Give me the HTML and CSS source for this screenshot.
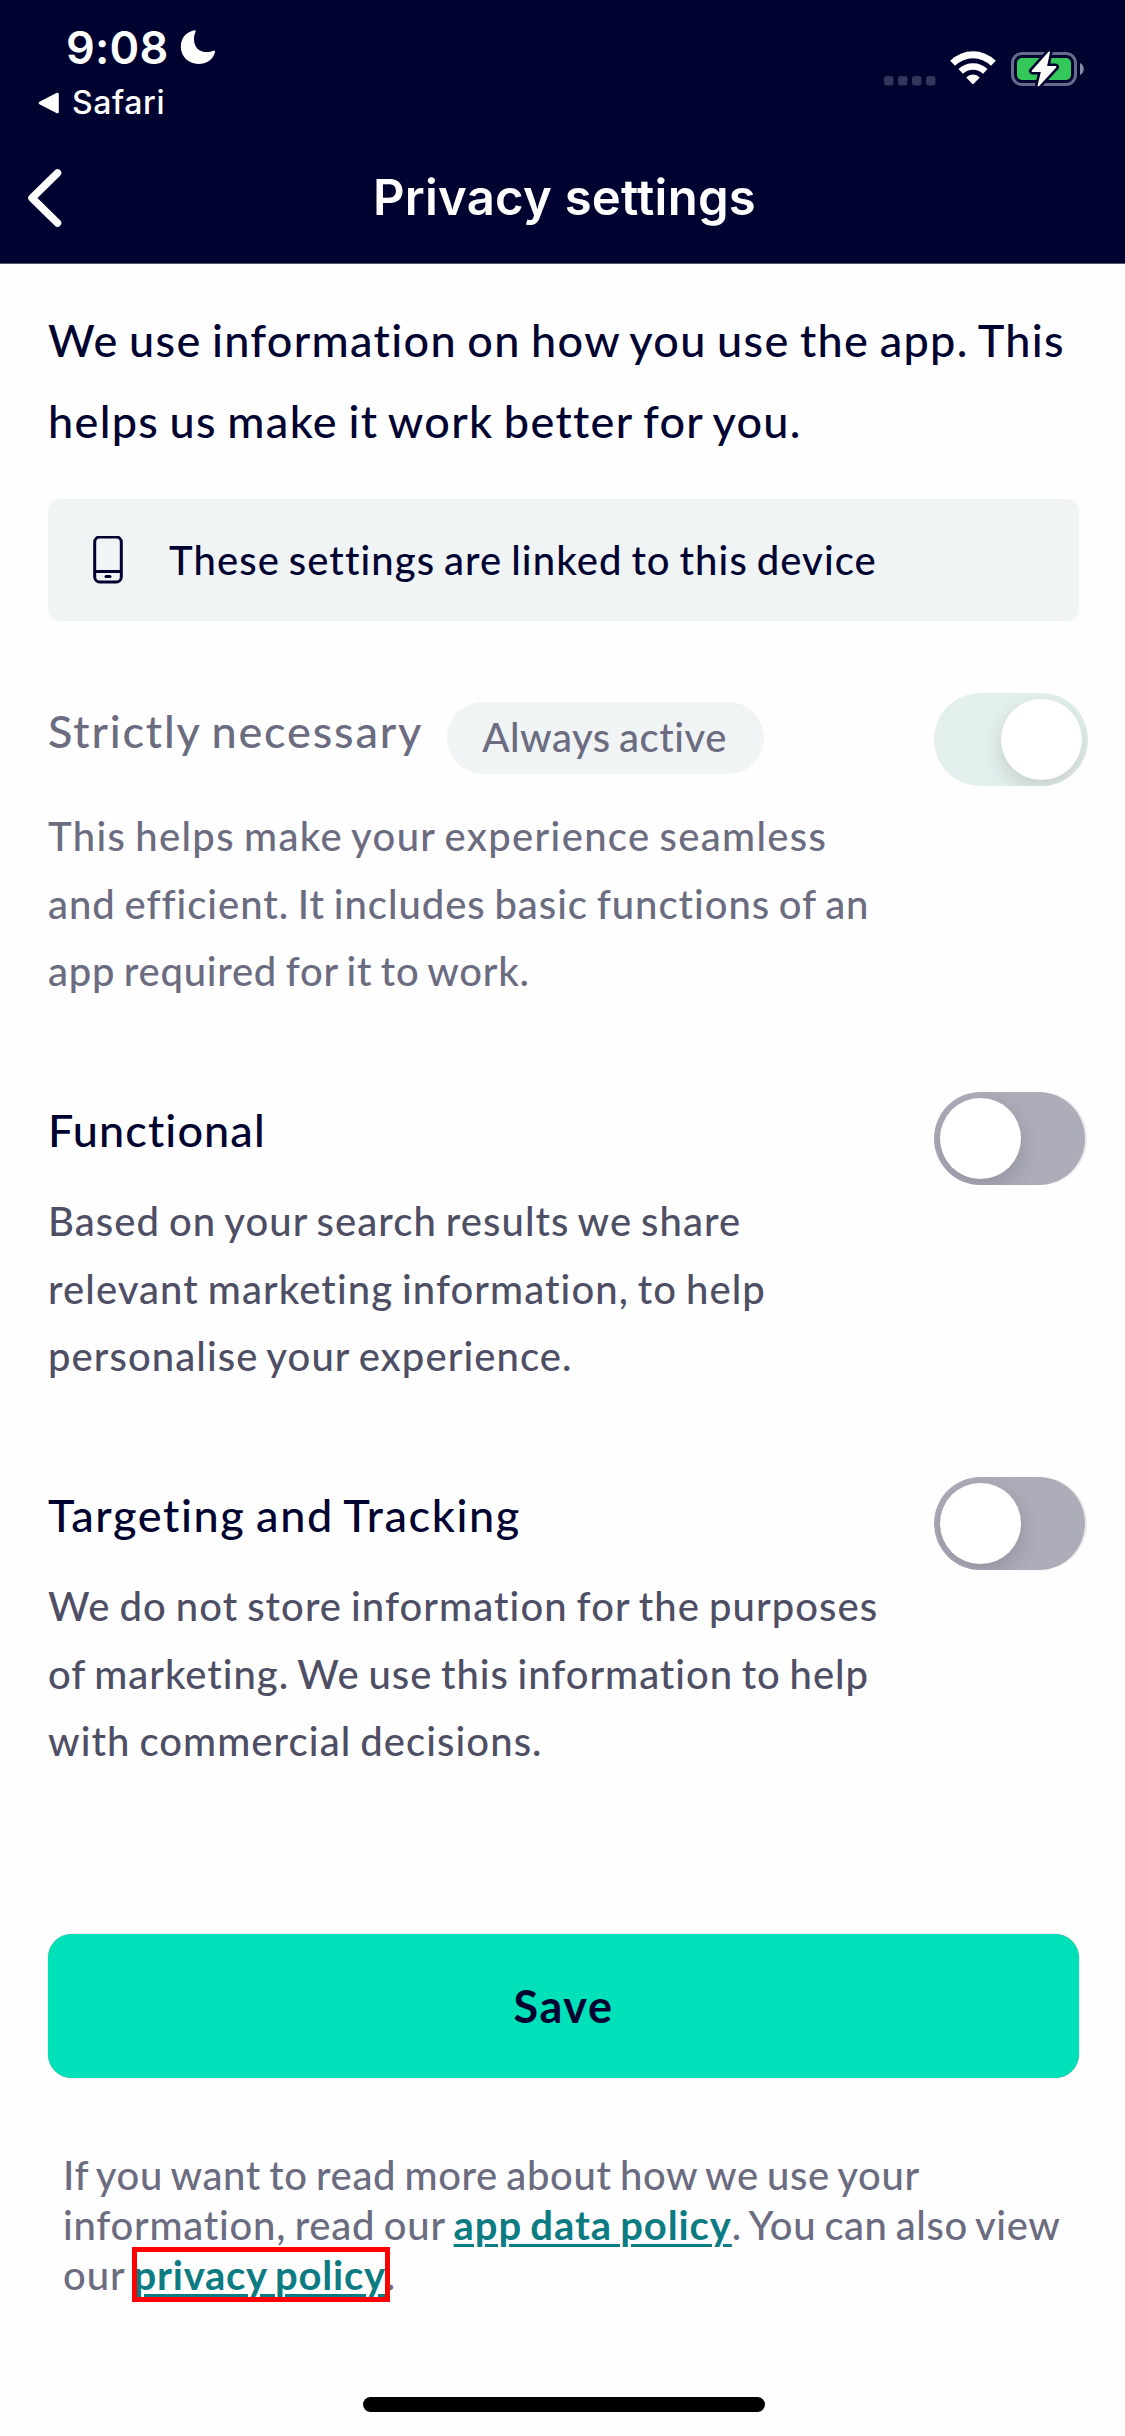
FILE: index.html
```html
<!DOCTYPE html>
<html lang="en">
<head>
<meta charset="utf-8">
<title>Privacy settings</title>
<link rel="stylesheet" href="styles.css">
</head>
<body>
<header class="header">
  <div class="status">
    <div class="status-left">
      <div class="time-row">
        <span class="time">9:08</span>
        <svg class="moon" width="36" height="36" viewBox="0 0 36 36"><path d="M14.2 1.2C5.800 3 .8 9.400.8 17.600.8 27.500 8.400 35 18.400 35 26.500 35 33 30.500 35 23.200c.3-1.200-.5-1.900-1.600-1.400-2 .9-4 1.300-6.200 1.300-8.200 0-13.200-5-13.200-13.200 0-2.400.5-4.700 1.400-6.700.7-1.500.2-2.300-1.200-2z" fill="#fff"/></svg>
      </div>
      <div class="back-app">
        <svg width="22" height="22" viewBox="0 0 22 22"><path d="M19.500 2v18L2 11z" fill="#fff" stroke="#fff" stroke-width="2.600" stroke-linejoin="round"/></svg>
        <span>Safari</span>
      </div>
    </div>
    <div class="status-right">
      <svg class="signal" width="53" height="10" viewBox="0 0 53 10" fill="#33355a"><rect width="9.500" height="9.500" rx="3"/><rect x="14" width="9.500" height="9.500" rx="3"/><rect x="28" width="9.500" height="9.500" rx="3"/><rect x="42" width="9.500" height="9.500" rx="3"/></svg>
      <svg class="wifi" width="46" height="34" viewBox="0 0 46 34" fill="none" stroke="#fff">
        <path d="M2.600 12.300Q11.500 3.700 23 3.700T43.400 12.300" stroke-width="7"/>
        <path d="M10.700 20.400Q16 15.400 23 15.400T35.300 20.400" stroke-width="6.500"/>
        <path d="M16.200 26.600Q19 23.600 23 23.600T29.800 26.600L23.700 32.700q-.7.7-1.400 0z" fill="#fff" stroke="none"/>
      </svg>
      <svg class="battery" width="74" height="38" viewBox="0 0 74 38">
        <rect x="1.500" y="3.500" width="63" height="31" rx="9.500" fill="none" stroke="#6a6b8c" stroke-width="3"/>
        <path d="M69 13c5 2 5 10 0 12z" fill="#8a8ba3"/>
        <rect x="6" y="8" width="54" height="22" rx="5" fill="#34c759"/>
        <path d="M38 2.500L21.500 21h9.500L27.500 35.500 44.500 17H35z" fill="#fff" stroke="#000330" stroke-width="7" stroke-linejoin="round"/>
        <path d="M38 2.500L21.500 21h9.500L27.500 35.500 44.500 17H35z" fill="#fff" stroke="#fff" stroke-width="1.800" stroke-linejoin="round"/>
      </svg>
    </div>
  </div>
  <div class="nav">
    <svg class="chevron" width="34" height="58" viewBox="0 0 34 58"><path d="M29.500 4L4 29l25.500 25" fill="none" stroke="#fff" stroke-width="7.500" stroke-linecap="round" stroke-linejoin="round"/></svg>
    <h1 class="title">Privacy settings</h1>
  </div>
</header>
<main class="content">
  <p class="intro"><span class="line ls-13">We use information on how you use the app. This</span><span class="line ls-13">helps us make it work better for you.</span></p>
  <div class="notice">
    <svg width="30" height="49" viewBox="0 0 30 49" fill="none" stroke="#000330" stroke-width="3"><rect x="1.700" y="1" width="26.600" height="45" rx="5"/><path d="M2 35.500h26"/><path d="M13 40.500h4" stroke-linecap="round"/></svg>
    <span class="ls-11">These settings are linked to this device</span>
  </div>
  <section class="setting disabled">
    <div class="text">
      <div class="heading with-pill"><h2 class="ls-18">Strictly necessary</h2><span class="pill ls-05">Always active</span></div>
      <p><span class="line ls-13">This helps make your experience seamless</span><span class="line ls-10">and efficient. It includes basic functions of an</span><span class="line ls-07">app required for it to work.</span></p>
    </div>
    <div class="toggle on"><div class="knob"></div></div>
  </section>
  <section class="setting">
    <div class="text">
      <div class="heading"><h2 class="ls-11">Functional</h2></div>
      <p><span class="line ls-11">Based on your search results we share</span><span class="line ls-11">relevant marketing information, to help</span><span class="line ls-11">personalise your experience.</span></p>
    </div>
    <div class="toggle"><div class="knob"></div></div>
  </section>
  <section class="setting">
    <div class="text">
      <div class="heading"><h2 class="ls-17">Targeting and Tracking</h2></div>
      <p><span class="line ls-11">We do not store information for the purposes</span><span class="line ls-10">of marketing. We use this information to help</span><span class="line ls-11">with commercial decisions.</span></p>
    </div>
    <div class="toggle"><div class="knob"></div></div>
  </section>
  <button class="save ls-17">Save</button>
  <p class="footnote"><span class="line ls-06">If you want to read more about how we use your</span><span class="line"><span class="ls-07">information, read our </span><a class="link">app data policy</a><span class="ls-05">. You can also view</span></span><span class="line"><span class="ls-10">our </span><a class="link marked">privacy policy</a>.</span></p>
</main>
<div class="home-bar"></div>
</body>
</html>
```
FILE: styles.css
```css
*, *::after { box-sizing: border-box; }
body { margin: 0; background: #fefefe; color: #000330; font-family: "Lato", "Noto Sans", sans-serif; font-weight: 500; }
h1, h2, p { margin: 0; }
svg { display: block; flex: none; }

.header { height: 264px; background: #000330; color: #fff; font-family: "Inter", sans-serif; border-bottom: 1px solid #55566a; }
.status { display: flex; justify-content: space-between; height: 158px; padding: 23px 40px 0 38px; }
.status-left { display: flex; flex-direction: column; gap: 9px; }
.time-row { display: flex; gap: 12px; padding-left: 28px; }
.time { font-size: 45px; font-weight: 570; line-height: 50px; letter-spacing: 0.2px; }
.moon { margin-top: 6px; }
.back-app { display: flex; align-items: center; gap: 12px; font-size: 32px; line-height: 41px; letter-spacing: 0.6px; }
.status-right { display: flex; align-items: flex-start; }
.signal { margin: 53px 13px 0 0; }
.wifi { margin: 28px 15px 0 0; }
.battery { margin-top: 27px; }
.nav { display: grid; grid-template-columns: 34px 1fr 34px; align-items: center; height: 80px; padding: 0 28px; }
.title { padding-left: 4px; text-align: center; font-size: 49px; font-weight: 580; line-height: 80px; letter-spacing: 0.25px; }

.content { padding: 36px 46px 0 48px; word-spacing: -2.3px; }
.line { display: block; white-space: nowrap; }
.intro { font-size: 45px; line-height: 81px; }
.notice { display: flex; align-items: center; gap: 46px; height: 122px; margin-top: 37px; border-radius: 12px; padding: 0 45px; background: #f0f4f5; font-size: 40px; }

.setting { display: flex; justify-content: space-between; margin-top: 86.5px; margin-right: -9px; }
.notice + .setting { margin-top: 72px; }
.text { padding-top: 2px; }
.heading { display: flex; height: 94px; padding-top: 6px; }
.with-pill { height: 108px; gap: 24px; }
h2 { font-size: 45px; font-weight: 500; line-height: 60px; }
.pill { height: 72px; margin-top: 1px; padding: 0 37px 0 35px; border-radius: 36px; background: #f0f4f5; font-size: 40px; line-height: 71px; }
.setting p { color: #4e4f65; font-size: 40px; line-height: 67.5px; }
.setting.disabled, .setting.disabled p { color: #6b6c80; }

.toggle { flex: none; width: 151px; height: 93px; margin-right: 3px; padding: 6px; border-radius: 47px; background: #adadb9; box-shadow: 2px 0 1px #e8e8ea; overflow: hidden; }
.knob { width: 81px; height: 81px; border-radius: 50%; background: #fff; box-shadow: 0 8px 22px rgba(0, 0, 40, 0.16); }
.toggle.on { width: 154px; margin-right: 0; background: #e4f0ed; box-shadow: none; }
.toggle.on .knob { margin-left: 61px; box-shadow: 0 8px 22px rgba(0, 0, 0, 0.15); }

.save { display: block; width: 100%; height: 144px; margin: 158px 0 72px; padding: 0; border: 0; border-radius: 24px; background: #00e1b9; color: #000330; font: 700 45px "Lato", "Noto Sans", sans-serif; box-shadow: 0 0 1px #777; }
.footnote { padding-left: 15px; color: #6b6c80; font-size: 40px; line-height: 50px; }
.link { color: #0d7b82; font-weight: 700; letter-spacing: 0.9px; text-decoration: underline; text-decoration-thickness: 3px; text-underline-offset: 4px; }
.marked { position: relative; letter-spacing: 0.75px; }
/* highlight frame around the policy link */
.marked::after { content: ""; position: absolute; left: -2px; right: -4px; top: -4px; height: 55px; border: 5px solid #f00; }
.home-bar { position: relative; left: 1px; width: 402px; height: 15px; margin: 97px auto 0; border-radius: 8px; background: #000; }

.ls-05 { letter-spacing: 0.54px; }
.ls-06 { letter-spacing: 0.62px; }
.ls-07 { letter-spacing: 0.76px; }
.ls-10 { letter-spacing: 0.96px; }
.ls-11 { letter-spacing: 1.08px; }
.ls-13 { letter-spacing: 1.32px; }
.ls-17 { letter-spacing: 1.62px; }
.ls-18 { letter-spacing: 1.82px; }
```
